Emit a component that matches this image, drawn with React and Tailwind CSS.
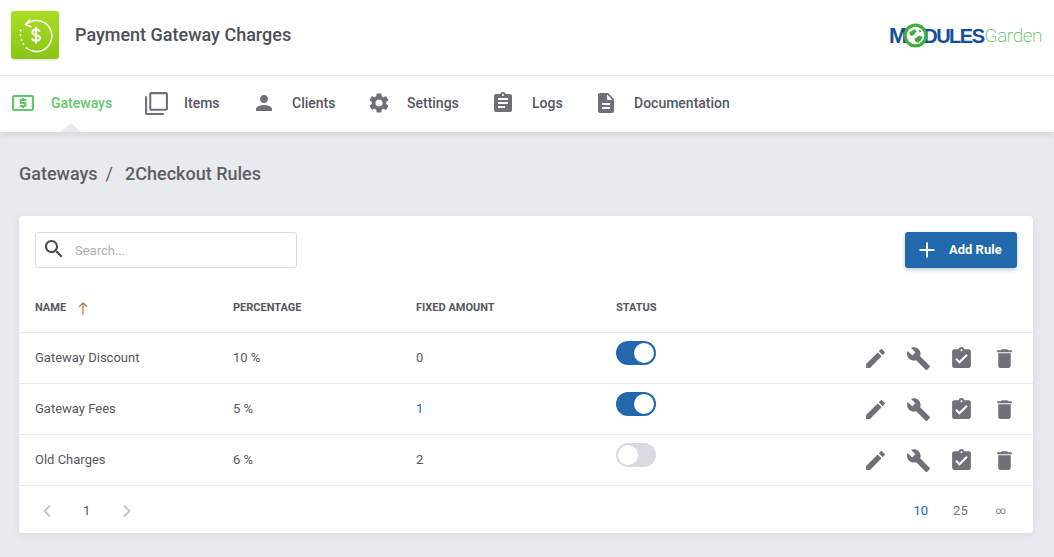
const P = {
  atm: "M11 17h2v-1h1c.55 0 1-.45 1-1v-3c0-.55-.45-1-1-1h-3v-1h4V8h-2V7h-2v1h-1c-.55 0-1 .45-1 1v3c0 .55.45 1 1 1h3v1H9v2h2v1zm9-13H4c-1.11 0-1.99.89-1.99 2L2 18c0 1.11.89 2 2 2h16c1.11 0 2-.89 2-2V6c0-1.11-.89-2-2-2zm0 14H4V6h16v12z",
  items: "M3 5H1v16c0 1.1.9 2 2 2h16v-2H3V5zm18-4H7c-1.1 0-2 .9-2 2v14c0 1.1.9 2 2 2h14c1.1 0 2-.9 2-2V3c0-1.1-.9-2-2-2zm0 16H7V3h14v14z",
  person: "M12 12c2.21 0 4-1.79 4-4s-1.79-4-4-4-4 1.79-4 4 1.79 4 4 4zm0 2c-2.67 0-8 1.34-8 4v2h16v-2c0-2.66-5.33-4-8-4z",
  gear: "M19.14,12.94c0.04-0.3,0.06-0.61,0.06-0.94c0-0.32-0.02-0.64-0.07-0.94l2.03-1.58c0.18-0.14,0.23-0.41,0.12-0.61 l-1.92-3.32c-0.12-0.22-0.37-0.29-0.59-0.22l-2.39,0.96c-0.5-0.38-1.03-0.7-1.62-0.94L14.4,2.81c-0.04-0.24-0.24-0.41-0.48-0.41 h-3.84c-0.24,0-0.43,0.17-0.47,0.41L9.25,5.35C8.66,5.59,8.12,5.92,7.63,6.29L5.24,5.33c-0.22-0.08-0.47,0-0.59,0.22L2.74,8.87 C2.62,9.08,2.66,9.34,2.86,9.48l2.03,1.58C4.84,11.36,4.8,11.69,4.8,12s0.02,0.64,0.07,0.94l-2.03,1.58 c-0.18,0.14-0.23,0.41-0.12,0.61l1.92,3.32c0.12,0.22,0.37,0.29,0.59,0.22l2.39-0.96c0.5,0.38,1.03,0.7,1.62,0.94l0.36,2.54 c0.05,0.24,0.24,0.41,0.48,0.41h3.84c0.24,0,0.44-0.17,0.47-0.41l0.36-2.54c0.59-0.24,1.13-0.56,1.62-0.94l2.39,0.96 c0.22,0.08,0.47,0,0.59-0.22l1.92-3.32c0.12-0.22,0.07-0.47-0.12-0.61L19.14,12.94z M12,15.6c-1.98,0-3.6-1.62-3.6-3.6 s1.62-3.6,3.6-3.6s3.6,1.62,3.6,3.6S13.98,15.6,12,15.6z",
  logs: "M19 3h-4.18C14.4 1.84 13.3 1 12 1c-1.3 0-2.4.84-2.82 2H5c-1.1 0-2 .9-2 2v14c0 1.1.9 2 2 2h14c1.1 0 2-.9 2-2V5c0-1.1-.9-2-2-2zm-7 0c.55 0 1 .45 1 1s-.45 1-1 1-1-.45-1-1 .45-1 1-1zm2 14H7v-2h7v2zm3-4H7v-2h10v2zm0-4H7V7h10v2z",
  doc: "M14 2H6c-1.1 0-1.99.9-1.99 2L4 20c0 1.1.89 2 1.99 2H18c1.1 0 2-.9 2-2V8l-6-6zm2 16H8v-2h8v2zm0-4H8v-2h8v2zm-3-5V3.5L18.5 9H13z",
  edit: "M3 17.25V21h3.75L17.81 9.94l-3.75-3.75L3 17.25zM20.71 7.04c.39-.39.39-1.02 0-1.41l-2.34-2.34c-.39-.39-1.02-.39-1.41 0l-1.83 1.83 3.75 3.75 1.83-1.83z",
  build: "M22.7 19l-9.1-9.1c.9-2.3.4-5-1.5-6.9-2-2-5-2.4-7.4-1.3L9 6 6 9 1.6 4.7C.4 7.1.9 10.1 2.9 12.1c1.9 1.9 4.6 2.4 6.9 1.5l9.1 9.1c.4.4 1 .4 1.4 0l2.3-2.3c.5-.4.5-1.1.1-1.4z",
  check: "M19 3h-4.18C14.4 1.84 13.3 1 12 1c-1.3 0-2.4.84-2.82 2H5c-1.1 0-2 .9-2 2v14c0 1.1.9 2 2 2h14c1.1 0 2-.9 2-2V5c0-1.1-.9-2-2-2zm-7 0c.55 0 1 .45 1 1s-.45 1-1 1-1-.45-1-1 .45-1 1-1zm-2 14l-4-4 1.41-1.41L10 14.17l6.59-6.59L18 9l-8 8z",
  del: "M6 19c0 1.1.9 2 2 2h8c1.1 0 2-.9 2-2V7H6v12zM19 4h-3.5l-1-1h-5l-1 1H5v2h14V4z",
  search: "M15.5 14h-.79l-.28-.27C15.41 12.59 16 11.11 16 9.5 16 5.91 13.09 3 9.5 3S3 5.91 3 9.5 5.91 16 9.5 16c1.61 0 3.09-.59 4.23-1.57l.27.28v.79l5 4.99L20.49 19l-4.99-5zm-6 0C7.01 14 5 11.99 5 9.5S7.01 5 9.5 5 14 7.01 14 9.5 11.99 14 9.5 14z",
};

function Icon({ d, className }) {
  return (
    <svg viewBox="0 0 24 24" fill="currentColor" className={className}>
      <path d={d} />
    </svg>
  );
}

function AppLogo() {
  return (
    <div className="w-12 h-12 rounded-[3px] bg-gradient-to-b from-[#a8dd24] to-[#8ac516] flex items-center justify-center shadow-sm">
      <svg viewBox="0 0 48 48" className="w-12 h-12" fill="none" stroke="#fff">
        <path d="M15.5 13 A15.5 15.5 0 1 1 15 36.5" strokeWidth="1.4" />
        <path d="M19 8.5 L14.5 13.5 L20.5 16" strokeWidth="1.4" />
        <circle cx="9.5" cy="24" r="0.9" fill="#fff" stroke="none" />
        <circle cx="9.8" cy="19.5" r="0.9" fill="#fff" stroke="none" />
        <circle cx="10.5" cy="29" r="0.9" fill="#fff" stroke="none" />
        <circle cx="12.5" cy="33" r="0.9" fill="#fff" stroke="none" />
        <path d="M28.6 20.8 C28.2 19.2 26.8 18.6 25 18.6 C23 18.6 21.4 19.5 21.4 21.3 C21.4 25.4 29 23.3 29 27.1 C29 29 27.2 29.8 25 29.8 C23 29.8 21.5 29 21 27.4 M25 15.8 V32.4" strokeWidth="2" />
      </svg>
    </div>
  );
}

function BrandLogo() {
  return (
    <div className="flex items-center font-['Liberation_Sans',sans-serif] leading-none">
      <span className="text-[#12509c] font-bold text-[22px]">M</span>
      <svg viewBox="0 0 24 24" className="w-[25px] h-[25px] -ml-[4px] -mr-[5px] relative">
        <circle cx="12" cy="12" r="10" fill="#fff" stroke="#3fae3f" strokeWidth="3" />
        <path d="M6 9 L11 6 L13 8 L10 12 L7 12 Z M11 15 L16 12 L19 14 L15 19 L12 18 Z M15 6 L18 8 L16 9 Z" fill="#3fae3f" />
      </svg>
      <span className="text-[#12509c] font-bold text-[20px] tracking-[-1.5px]">DULES</span>
      <span className="text-[#58bb58] font-['Roboto',sans-serif] font-extralight text-[19px] tracking-[-0.4px] ml-[1px]">Garden</span>
    </div>
  );
}

const rows = [
  { name: "Gateway Discount", pct: "10 %", amt: "0", on: true },
  { name: "Gateway Fees", pct: "5 %", amt: "1", on: true, blue: true },
  { name: "Old Charges", pct: "6 %", amt: "2", on: false },
];

function Toggle({ on }) {
  return (
    <div
      className={
        "w-10 h-6 rounded-full p-[2px] flex mb-[10px] " +
        (on ? "bg-[#2268ad] justify-end" : "bg-[#d9dbe4] justify-start")
      }
    >
      <div className="w-5 h-5 rounded-full bg-white" />
    </div>
  );
}

export default function App() {
  return (
    <div className="w-[1054px] h-[557px] overflow-hidden bg-[#e9eaef] font-['Roboto',sans-serif] text-[#55585f]">
      <header className="h-[76px] bg-white border-b border-[#eeeff3] flex items-center justify-between pl-[11px] pr-[12px]">
        <div className="flex items-center gap-4 -mt-[5px]">
          <AppLogo />
          <span className="text-[18px] font-medium text-[#4d5057] -mt-[2px]">Payment Gateway Charges</span>
        </div>
        <div className="-mt-[4px]">
          <BrandLogo />
        </div>
      </header>

      <nav className="relative h-[56px] bg-white shadow-[0_2px_6px_rgba(40,45,70,0.12)] flex items-start pl-[13px] pt-[15px] text-[14px] font-medium text-[#55585f]">
        <a className="flex items-center text-[#5fc96b] w-[131px]">
          <Icon d={P.atm} className="w-6 h-6 -ml-[2px] mr-[16px] scale-x-110" />
          <span>Gateways</span>
        </a>
        <a className="flex items-center w-[108px]">
          <Icon d={P.items} className="w-[25px] h-[25px] mr-[15px] text-[#6f7179]" />
          <span>Items</span>
        </a>
        <a className="flex items-center w-[115px]">
          <Icon d={P.person} className="w-6 h-6 mr-[16px] text-[#6f7179]" />
          <span>Clients</span>
        </a>
        <a className="flex items-center w-[124px]">
          <Icon d={P.gear} className="w-6 h-6 mr-[16px] text-[#6f7179]" />
          <span>Settings</span>
        </a>
        <a className="flex items-center w-[103px]">
          <Icon d={P.logs} className="w-6 h-6 mr-[17px] text-[#6f7179]" />
          <span>Logs</span>
        </a>
        <a className="flex items-center">
          <Icon d={P.doc} className="w-6 h-6 mr-[16px] text-[#6f7179]" />
          <span>Documentation</span>
        </a>
        <div className="absolute left-[61px] bottom-0 w-0 h-0 border-x-[10px] border-x-transparent border-b-[9px] border-b-[#e9eaef]" />
      </nav>

      <main className="pl-[19px] pr-[21px]">
        <div className="h-[84px] flex items-center pb-[2px] text-[18px] font-medium text-[#5c5f66]">
          <span>Gateways</span>
          <span className="ml-[8px] mr-[12px] font-normal">/</span>
          <span>2Checkout Rules</span>
        </div>

        <section className="h-[317px] bg-white rounded-[4px] shadow-[0_2px_8px_rgba(40,45,70,0.08)] flex flex-col">
          <div className="h-[116px] flex flex-col shrink-0">
            <div className="flex justify-between items-start px-4 pt-4">
              <label className="w-[262px] h-9 border border-[#dcdde6] rounded-[3px] flex items-center pl-[6px]">
                <Icon d={P.search} className="w-6 h-6 text-[#46494f] mr-[9px] -mt-[2px]" />
                <span className="text-[13px] text-[#aeb0b5] mt-[2px]">Search...</span>
              </label>
              <button className="w-[112px] h-9 bg-[#2268ad] rounded-[3px] shadow-[0_2px_4px_rgba(20,50,100,0.25)] text-white text-[13px] font-bold flex items-center pl-[14px]">
                <svg viewBox="0 0 16 16" className="w-4 h-4 mr-[14px]" fill="none" stroke="currentColor" strokeWidth="2">
                  <path d="M8 0.5 V15.5 M0.5 8 H15.5" />
                </svg>
                Add Rule
              </button>
            </div>
            <div className="grid grid-cols-[198px_183px_200px_1fr] pl-4 mt-[32px] text-[11px] font-bold text-[#55585f]">
              <div className="flex items-center">
                NAME
                <svg viewBox="0 0 12 12" className="w-[14px] h-[14px] ml-[10px] text-[#b5742a]" fill="none" stroke="currentColor" strokeWidth="1">
                  <path d="M6 11.5 V1.5 M2.5 5 L6 1.5 L9.5 5" />
                </svg>
              </div>
              <div>PERCENTAGE</div>
              <div>FIXED AMOUNT</div>
              <div>STATUS</div>
            </div>
          </div>

          {rows.map((r) => (
            <div
              key={r.name}
              className="h-[51px] shrink-0 border-t border-[#eaebef] grid grid-cols-[198px_183px_200px_1fr] items-center pl-4 text-[13px] text-[#55585f]"
            >
              <div>{r.name}</div>
              <div>{r.pct}</div>
              <div className={r.blue ? "text-[#2268ad]" : ""}>{r.amt}</div>
              <div className="flex items-center justify-between pr-[16px]">
                <Toggle on={r.on} />
                <div className="flex items-center gap-[18px] text-[#6f7179]">
                  <Icon d={P.edit} className="w-[25px] h-[25px]" />
                  <Icon d={P.build} className="w-[25px] h-[25px]" />
                  <Icon d={P.check} className="w-[25px] h-[25px]" />
                  <Icon d={P.del} className="w-[25px] h-[25px]" />
                </div>
              </div>
            </div>
          ))}

          <div className="flex-1 border-t border-[#eaebef] flex items-center justify-between text-[13px] pt-[2px]">
            <div className="flex items-center pl-[23px]">
              <svg viewBox="0 0 10 14" className="w-[10px] h-[14px] text-[#c4c5c9]" fill="none" stroke="currentColor" strokeWidth="1.8">
                <path d="M8 1.5 L2.5 7 L8 12.5" />
              </svg>
              <span className="ml-[31px] mr-[32px] text-[#3a5a86]">1</span>
              <svg viewBox="0 0 10 14" className="w-[10px] h-[14px] text-[#c4c5c9]" fill="none" stroke="currentColor" strokeWidth="1.8">
                <path d="M2 1.5 L7.5 7 L2 12.5" />
              </svg>
            </div>
            <div className="flex items-center pr-[27px]">
              <span className="text-[#2268ad] mr-[25px]">10</span>
              <span className="text-[#6f7179] mr-[28px]">25</span>
              <span className="text-[#6f7179] text-[10px]">∞</span>
            </div>
          </div>
        </section>
      </main>
    </div>
  );
}
